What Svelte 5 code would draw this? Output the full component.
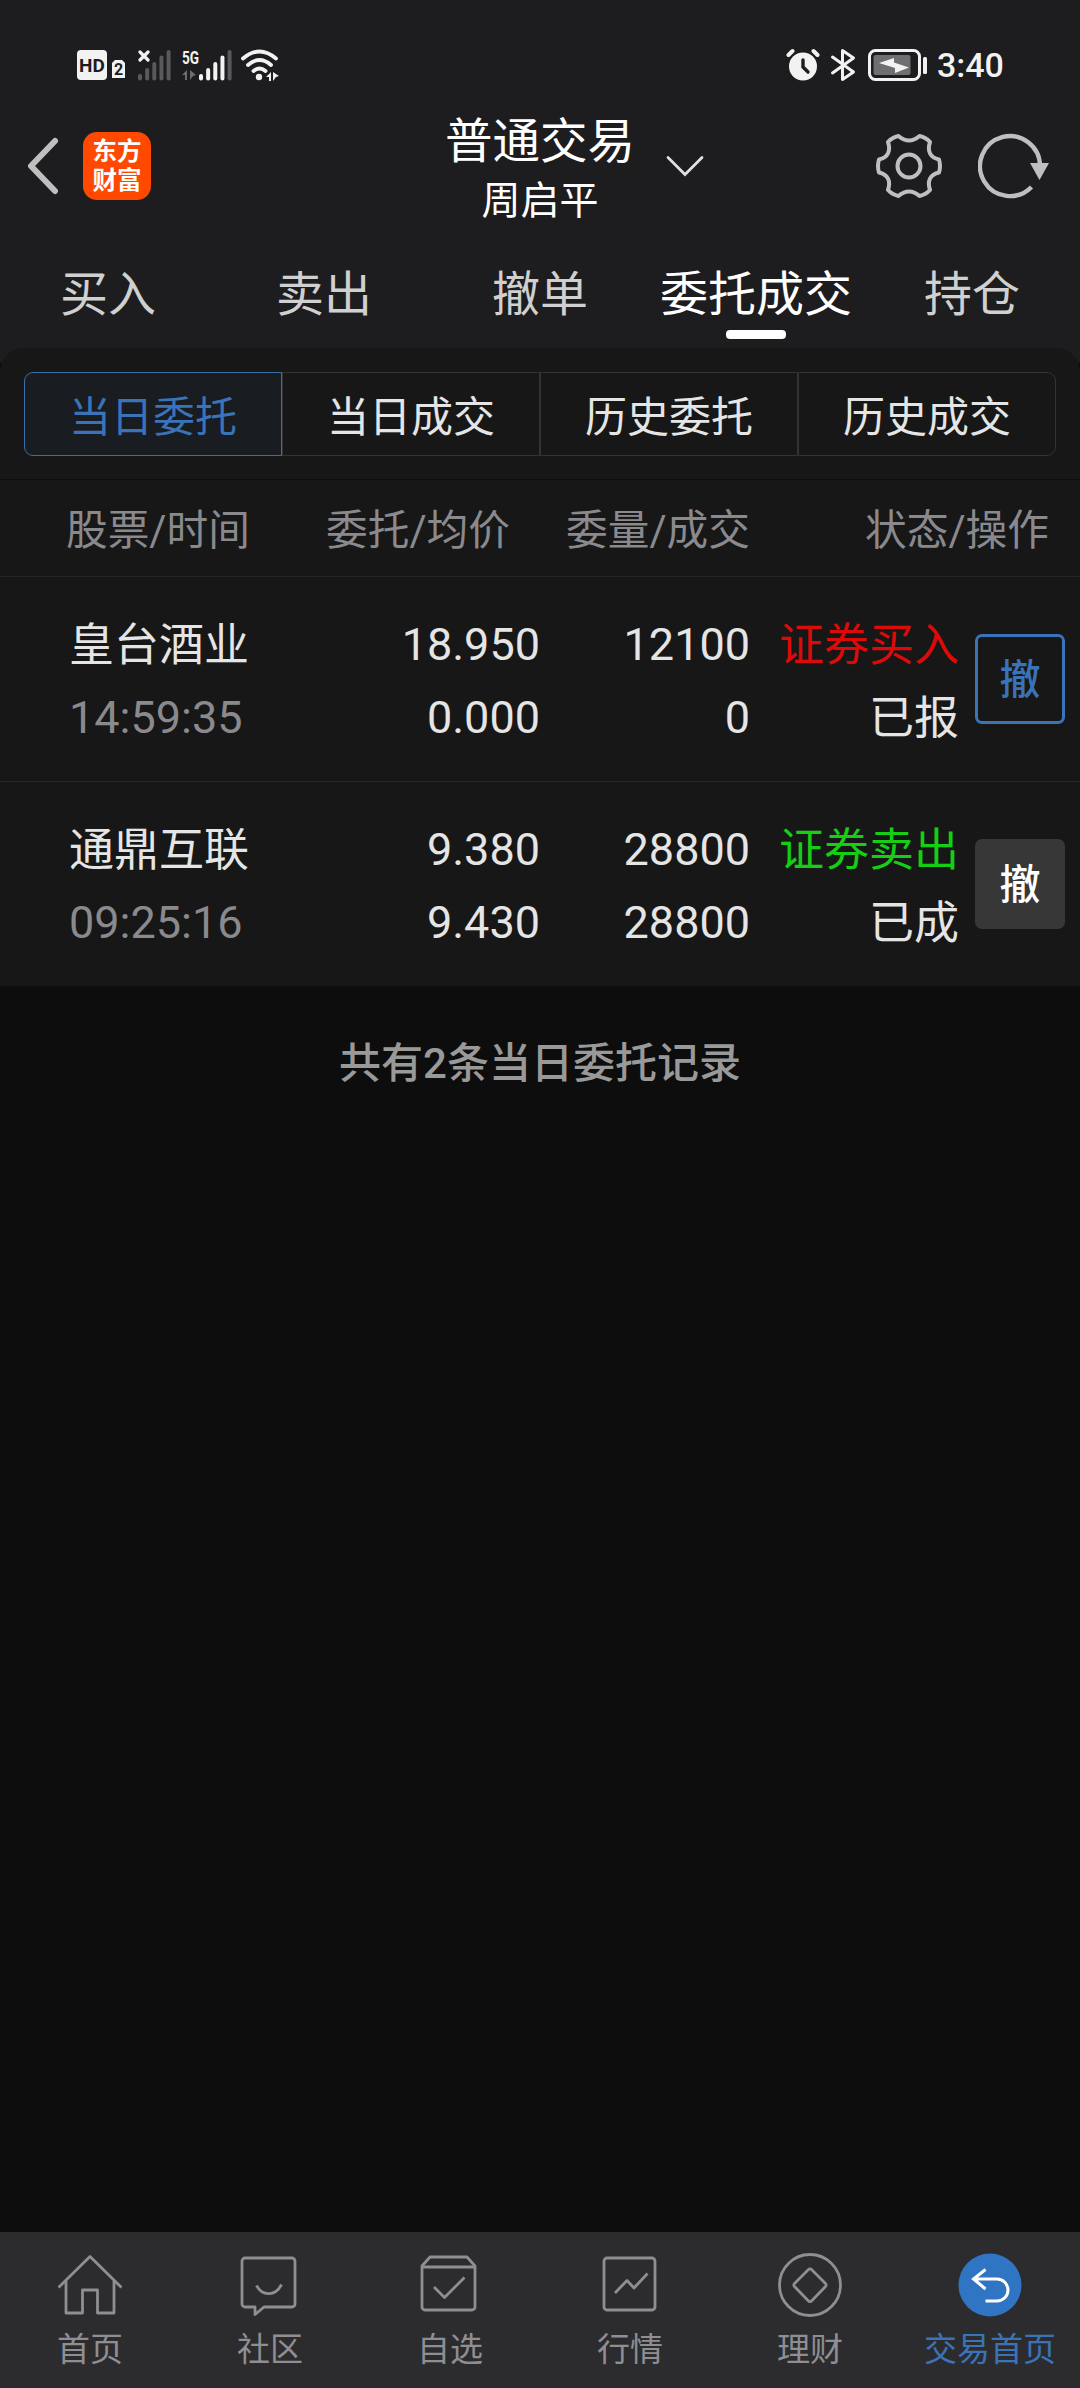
<script lang="ts">
	type Order = {
		name: string;
		time: string;
		price: string;
		average: string;
		amount: string;
		filled: string;
		side: 'buy' | 'sell';
		action: string;
		status: string;
		cancellable: boolean;
	};

	const tabs = ['买入', '卖出', '撤单', '委托成交', '持仓'];
	const segments = ['当日委托', '当日成交', '历史委托', '历史成交'];
	const columns = ['股票/时间', '委托/均价', '委量/成交', '状态/操作'];
	const nav = [
		{ id: 'home', label: '首页' },
		{ id: 'community', label: '社区' },
		{ id: 'watchlist', label: '自选' },
		{ id: 'market', label: '行情' },
		{ id: 'wealth', label: '理财' },
		{ id: 'trade', label: '交易首页' }
	];

	const orders: Order[] = [
		{
			name: '皇台酒业',
			time: '14:59:35',
			price: '18.950',
			average: '0.000',
			amount: '12100',
			filled: '0',
			side: 'buy',
			action: '证券买入',
			status: '已报',
			cancellable: true
		},
		{
			name: '通鼎互联',
			time: '09:25:16',
			price: '9.380',
			average: '9.430',
			amount: '28800',
			filled: '28800',
			side: 'sell',
			action: '证券卖出',
			status: '已成',
			cancellable: false
		}
	];

	let activeTab = $state('委托成交');
	let activeSegment = $state('当日委托');
	let activeNav = $state('trade');

	const barTops = [25, 19, 13, 6.5, 1];
</script>

{#snippet bars(lit: number)}
	{#each barTops as top, i}
		<rect
			x={i * 7.15}
			y={top}
			width="4"
			height={31.5 - top}
			rx="2"
			fill={i < lit ? '#f2f2f2' : '#59595b'}
		/>
	{/each}
{/snippet}

<div class="app">
	<header>
		<div class="statusbar">
			<svg class="hd" width="48" height="32" viewBox="0 0 48 32">
				<rect x="0" y="1" width="30" height="30" rx="4" fill="#f2f2f2" />
				<text x="15" y="22.8" text-anchor="middle" font-size="19" font-weight="700" fill="#1d1d1f">HD</text>
				<path d="M38 11h7l3 3v15H35V14z" fill="#f2f2f2" />
				<text x="41.5" y="26" text-anchor="middle" font-size="16" font-weight="700" fill="#1d1d1f">2</text>
			</svg>
			<svg class="sim" width="33" height="32" viewBox="0 0 33 32">
				<path d="M2 3l8 8M10 3l-8 8" stroke="#f2f2f2" stroke-width="3.2" stroke-linecap="round" />
				{@render bars(0)}
			</svg>
			<svg class="sim-5g" width="50" height="48" viewBox="0 -8 50 48">
				<text x="0" y="14.5" font-size="19" font-weight="700" fill="#f2f2f2" textLength="17" lengthAdjust="spacingAndGlyphs">5G</text>
				<path d="M0 26l5-5v10H3v-5zM8 21l6 5-3 1-3 4z" fill="#6c6c6e" />
				<g transform="translate(17 0)">{@render bars(4)}</g>
			</svg>
			<svg class="wifi" width="40" height="32" viewBox="0 0 40 32">
				<g fill="none" stroke="#f2f2f2" stroke-width="3.8" stroke-linecap="round">
					<path d="M2 9.5Q18.5 -4.5 35 9.5" />
					<path d="M7 16Q18.5 6 30 16" />
					<path d="M12.5 22Q18.5 17 24.5 22" />
				</g>
				<circle cx="18" cy="28" r="3.2" fill="#f2f2f2" />
				<path d="M25 28l5-5v9h-2v-4zM32 23l6 4-3 1-3 4z" fill="#f2f2f2" />
			</svg>
			<svg class="alarm" width="34" height="34" viewBox="0 0 34 34">
				<circle cx="17" cy="18.5" r="14" fill="#f2f2f2" />
				<path d="M2.5 7l4-4M31.5 7l-4-4" stroke="#f2f2f2" stroke-width="4" stroke-linecap="round" />
				<path d="M17 12v7l5 5" fill="none" stroke="#1d1d1f" stroke-width="3.4" stroke-linecap="round" />
			</svg>
			<svg class="bluetooth" width="26" height="34" viewBox="0 0 26 34">
				<path
					d="M2.5 9l21 15-11 7.500V2.500l11 7.500-21 15"
					fill="none"
					stroke="#f2f2f2"
					stroke-width="3"
					stroke-linejoin="round"
					stroke-linecap="round"
				/>
			</svg>
			<svg class="battery" width="60" height="34" viewBox="0 0 60 34">
				<rect x="1.5" y="2.5" width="50" height="29" rx="6" fill="none" stroke="#f2f2f2" stroke-width="3" />
				<rect x="5.5" y="7" width="37" height="20" rx="2" fill="#6f6f71" />
				<path d="M11 15l15-5v4.500l15 5-14 5.500v-5z" fill="#f2f2f2" />
				<rect x="55" y="9" width="4" height="17" rx="1.5" fill="#f2f2f2" />
			</svg>
			<span class="clock">3:40</span>
		</div>

		<div class="titlebar">
			<div class="side">
				<svg class="back" width="32" height="58" viewBox="0 0 32 58">
					<path d="M28 4L4 29l24 25" fill="none" stroke="#bfbfbf" stroke-width="6" stroke-linecap="round" stroke-linejoin="round" />
				</svg>
				<div class="logo"><span>东方</span><span>财富</span></div>
			</div>
			<div class="account">
				<h1>普通交易</h1>
				<p>周启平</p>
			</div>
			<div class="side">
				<svg class="chevron" width="38" height="22" viewBox="0 0 38 22">
					<path d="M2 2.5l17 17 17-17" fill="none" stroke="#e0e0e0" stroke-width="2.8" stroke-linecap="round" />
				</svg>
				<svg class="gear" width="66" height="66" viewBox="0 0 66 66">
					<g fill="none" stroke="#bfbfbf" stroke-width="4" stroke-linejoin="round">
						<path
							d="M22.5 3Q33 12 43.5 3Q50 4.5 54 9C51 18 54 24.5 63 26.5Q65 33 63 39.5C54 41.5 51 48 54 57Q50 61.5 43.5 63Q33 54 22.5 63Q16 61.5 12 57C15 48 12 41.5 3 39.5Q1 33 3 26.5C12 24.5 15 18 12 9Q16 4.5 22.5 3Z"
						/>
						<circle cx="33" cy="33" r="11.5" />
					</g>
				</svg>
				<svg class="refresh" width="72" height="66" viewBox="0 0 72 66">
					<path d="M62 33A30 30 0 1 0 53.500 54" fill="none" stroke="#bfbfbf" stroke-width="4.4" />
					<path d="M52 30h19L61.500 47z" fill="#bfbfbf" />
				</svg>
			</div>
		</div>

		<nav class="tabs">
			{#each tabs as tab}
				<button class="tab" class:active={tab === activeTab} onclick={() => (activeTab = tab)}>{tab}</button>
			{/each}
		</nav>
	</header>

	<main>
		<section class="filter">
			<div class="segments">
				{#each segments as segment}
					<button
						class="segment"
						class:active={segment === activeSegment}
						onclick={() => (activeSegment = segment)}>{segment}</button
					>
				{/each}
			</div>
		</section>

		<section class="orders">
			<div class="head">
				{#each columns as column}
					<span>{column}</span>
				{/each}
			</div>
			{#each orders as order}
				<div class="order">
					<div class="cell left">
						<span class="text">{order.name}</span>
						<span class="muted">{order.time}</span>
					</div>
					<div class="cell">
						<span>{order.price}</span>
						<span>{order.average}</span>
					</div>
					<div class="cell">
						<span>{order.amount}</span>
						<span>{order.filled}</span>
					</div>
					<div class="cell">
						<span class="text {order.side}">{order.action}</span>
						<span class="text">{order.status}</span>
					</div>
					<button class="cancel" disabled={!order.cancellable}>撤</button>
				</div>
			{/each}
		</section>

		<p class="summary">共有{orders.length}条当日委托记录</p>
	</main>

	<nav class="bottom">
		{#each nav as item}
			<button class="nav-item" class:active={item.id === activeNav} onclick={() => (activeNav = item.id)}>
				<svg width="66" height="66" viewBox="0 0 66 66" fill="none" stroke="currentColor" stroke-width="2.8" stroke-linejoin="round">
					{#if item.id === 'home'}
						<path d="M1.5 35.5L33 4.5l31.5 31" />
						<path d="M9 29v32h16.500V38h15v23H57V29" />
					{:else if item.id === 'community'}
						<path d="M8 6h47a3 3 0 0 1 3 3v43a3 3 0 0 1-3 3H27l-9 7.500V55H8a3 3 0 0 1-3-3V9a3 3 0 0 1 3-3z" />
						<path d="M19.5 33.5c6 11 19 11 25-1" />
					{:else if item.id === 'watchlist'}
						<path d="M5 14v41a3 3 0 0 0 3 3h47a3 3 0 0 0 3-3V14l-8-9H13z" />
						<path d="M5 15h52M17 35l10.500 10.500L47.500 25.500" />
					{:else if item.id === 'market'}
						<rect x="7" y="6" width="51" height="52" rx="3" />
						<path d="M18 41l12-12.500 7 7.500 13.500-14.500" />
					{:else if item.id === 'wealth'}
						<circle cx="33" cy="33" r="30.5" />
						<path d="M31.5 17.5a2 2 0 0 1 3 0l14 14a2 2 0 0 1 0 3l-14 14.500a2 2 0 0 1-3 0L17.500 34.500a2 2 0 0 1 0-3z" />
					{:else}
						<circle cx="33" cy="33" r="31.5" fill="#3075c4" stroke="none" />
						<path d="M28.5 17.5L16.500 27 28.500 37M17 27h23a11 11 0 0 1 0 22H28.500" stroke="#fff" stroke-width="3" stroke-linejoin="miter" />
					{/if}
				</svg>
				<span>{item.label}</span>
			</button>
		{/each}
	</nav>
</div>

<style>
	:global(body) {
		background: #0d0d0d;
	}

	.app {
		display: flex;
		flex-direction: column;
		width: 1080px;
		height: 2388px;
		overflow: hidden;
		background: #0d0d0d;
		color: #e5e5e5;
		font-family: Roboto, 'Noto Sans CJK SC', sans-serif;
	}

	button {
		padding: 0;
		border: 0;
		background: none;
		color: inherit;
		font: inherit;
	}

	svg {
		display: block;
		flex: none;
	}

	header {
		height: 363px;
		background: #1d1d1f;
	}

	.statusbar {
		display: flex;
		align-items: center;
		height: 70px;
		padding: 30px 77px 0;
	}

	.sim {
		margin-left: 13px;
	}

	.sim-5g {
		margin-left: 11px;
	}

	.wifi {
		margin-left: 9px;
	}

	.alarm {
		margin-left: auto;
	}

	.bluetooth {
		margin-left: 10px;
	}

	.battery {
		margin-left: 12px;
	}

	.clock {
		width: 66px;
		margin-left: 9px;
		color: #f2f2f2;
		font-size: 34px;
		font-weight: 500;
		line-height: 40px;
		white-space: nowrap;
	}

	.titlebar {
		display: grid;
		grid-template-columns: 1fr 216px 1fr;
		align-items: center;
		height: 132px;
		padding: 0 25px;
	}

	.side {
		display: flex;
		align-items: center;
	}

	.back {
		margin-left: 2px;
	}

	.logo {
		display: flex;
		flex-direction: column;
		align-items: center;
		justify-content: center;
		width: 68px;
		height: 68px;
		margin-left: 24px;
		border-radius: 14px;
		background: #ff4800;
		color: #fff;
		font-size: 24.5px;
		font-weight: 700;
		line-height: 29px;
	}

	.account {
		padding-top: 10px;
		text-align: center;
		color: #fff;
	}

	h1 {
		margin: 0;
		font-size: 47.5px;
		font-weight: 400;
		line-height: 60px;
	}

	.account p {
		margin: 0;
		font-size: 39px;
		line-height: 58px;
	}

	.chevron {
		margin-left: 18px;
	}

	.gear {
		margin-left: auto;
	}

	.refresh {
		margin: 0 5px 0 36px;
	}

	.tabs {
		display: flex;
		height: 131px;
	}

	.tab {
		position: relative;
		flex: 1;
		height: 131px;
		padding-bottom: 6px;
		color: #d0d0d0;
		font-size: 48px;
		line-height: 125px;
	}

	.tab.active {
		color: #fff;
	}

	.tab.active::after {
		content: '';
		position: absolute;
		left: 78px;
		bottom: 24px;
		width: 60px;
		height: 9px;
		border-radius: 4px;
		background: #fff;
	}

	main {
		flex: 1;
	}

	.filter {
		position: relative;
		height: 131px;
		margin-top: -15px;
		box-sizing: border-box;
		padding: 24px 24px 0;
		border-radius: 24px 24px 0 0;
		background: #171717;
	}

	.segments {
		display: flex;
		height: 84px;
	}

	.segment {
		flex: 1;
		padding-bottom: 2px;
		border: 1px solid #333;
		font-size: 42px;
	}

	.segment:first-child {
		border-radius: 9px 0 0 9px;
	}

	.segment:last-child {
		border-radius: 0 9px 9px 0;
	}

	.segment.active {
		border-color: #3a6ea8;
		background: #191c21;
		color: #3a73b8;
	}

	.orders {
		border-top: 1px solid #0d0d0d;
		background: #171717;
	}

	.head {
		display: grid;
		grid-template-columns: 270px 240px 240px 299px;
		box-sizing: border-box;
		height: 97px;
		padding-top: 6px;
		border-bottom: 1px solid #262626;
		color: #8a8a8e;
		font-size: 41.7px;
		line-height: 90px;
		text-align: right;
	}

	.head span:first-child {
		padding-left: 66px;
		text-align: left;
	}

	.order {
		display: grid;
		grid-template-columns: 270px 270px 210px 209px 90px;
		height: 204px;
		font-size: 45px;
		line-height: 73px;
	}

	.order + .order {
		border-top: 1px solid #262626;
	}

	.cell {
		display: flex;
		flex-direction: column;
		padding-top: 31px;
		text-align: right;
	}

	.cell.left {
		padding-left: 69px;
		text-align: left;
	}

	/* Chinese glyphs sit slightly high next to the Roboto digits */
	.text {
		padding-top: 3px;
		line-height: 70px;
	}

	.muted {
		color: #8a8a8e;
	}

	.buy {
		color: #dd0a0a;
	}

	.sell {
		color: #14cf14;
	}

	.cancel {
		align-self: center;
		box-sizing: border-box;
		width: 90px;
		height: 90px;
		margin-left: 16px;
		padding-top: 3px;
		border: 3px solid #3a73b8;
		border-radius: 7px;
		color: #3a73b8;
		font-size: 41px;
		font-weight: 500;
	}

	.cancel:disabled {
		border-color: #373737;
		background: #373737;
		color: #fff;
	}

	.summary {
		margin: 0;
		padding-top: 47px;
		color: #999;
		font-size: 42px;
		font-weight: 500;
		line-height: 62px;
		text-align: center;
	}

	.bottom {
		display: flex;
		height: 156px;
		background: #2c2c2e;
	}

	.nav-item {
		display: flex;
		flex: 1;
		flex-direction: column;
		align-items: center;
		padding-top: 20px;
		color: #8e8e93;
		font-size: 33px;
		line-height: 56px;
		white-space: nowrap;
	}

	.nav-item span {
		margin-top: 4px;
	}

	.nav-item.active {
		color: #3a73b8;
	}
</style>
